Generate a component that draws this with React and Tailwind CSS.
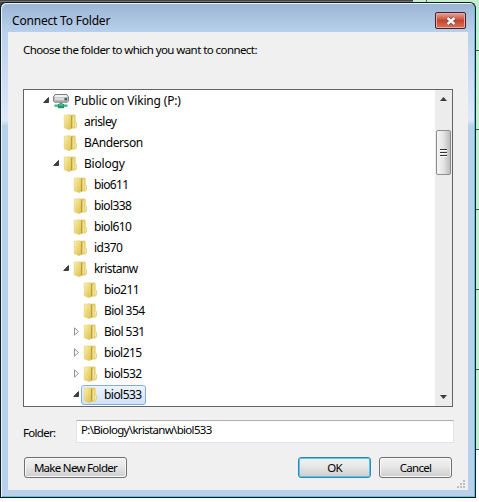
const tree = [
  { label: "Public on Viking (P:)", level: 0, arrow: "open", drive: true, track: "tracking-[-0.17px]" },
  { label: "arisley", level: 1 },
  { label: "BAnderson", level: 1, track: "tracking-[-0.4px]" },
  { label: "Biology", level: 1, arrow: "open", track: "tracking-[-0.2px]" },
  { label: "bio611", level: 2, track: "tracking-[-0.65px]" },
  { label: "biol338", level: 2, track: "tracking-[-0.6px]" },
  { label: "biol610", level: 2, track: "tracking-[-0.6px]" },
  { label: "id370", level: 2 },
  { label: "kristanw", level: 2, arrow: "open" },
  { label: "bio211", level: 3 },
  { label: "Biol 354", level: 3 },
  { label: "Biol 531", level: 3, arrow: "closed" },
  { label: "biol215", level: 3, arrow: "closed" },
  { label: "biol532", level: 3, arrow: "closed" },
  { label: "biol533", level: 3, arrow: "open", selected: true },
];

const indents = ["pl-[19px]", "pl-[29px]", "pl-[39px]", "pl-[49px]"];

function Arrow({ kind }) {
  return (
    <svg width="7" height="9" viewBox="0 0 7 9" className="shrink-0">
      {kind === "open" && <path d="M5.5 1.5V6.5H.7Z" fill="#404040" stroke="#262626" strokeWidth=".8" />}
      {kind === "closed" && <path d="M1.5 .9V8.1L5.5 4.5Z" fill="#fff" stroke="#929292" strokeWidth="1" />}
    </svg>
  );
}

function Folder() {
  return (
    <svg width="16" height="16" viewBox="0 0 16 16" className="shrink-0">
      <defs>
        <linearGradient id="folderFront" x1="0" y1="0" x2="1" y2="1">
          <stop offset="0" stopColor="#fbf0a4" />
          <stop offset="1" stopColor="#dcbf50" />
        </linearGradient>
        <linearGradient id="folderBack" x1="0" y1="0" x2="1" y2="0">
          <stop offset="0" stopColor="#c9a83d" />
          <stop offset="1" stopColor="#f3e48e" />
        </linearGradient>
      </defs>
      <path d="M6 1 11.8.5 12.8 1.4V7.5L13.9 8.6V13L12.6 14.6H6Z" fill="url(#folderBack)" />
      <path d="M1.2 1.2 6.8.7 8.3 2V14.6L6.4 15.7 1.2 13.8Z" fill="url(#folderFront)" stroke="#dcc76a" strokeWidth=".5" />
      <path d="M8.6 2.2V14.3" stroke="#b08e2f" strokeWidth=".8" />
      <path d="M10.2 2.5V13.5" stroke="#fff4b5" strokeWidth=".8" />
      <path d="M13 8.6V12.8" stroke="#c6b254" strokeWidth=".6" />
      <path d="M12.4 8.5V12.5" stroke="#f8f5d8" strokeWidth=".8" />
    </svg>
  );
}

function Drive() {
  return (
    <svg width="16" height="16" viewBox="0 0 16 16" className="shrink-0">
      <path d="M2.2 1.5H13.8L15.5 3.8V8L14.3 9.2H1.7L.5 8V3.8Z" fill="#b9bcbe" stroke="#6f7275" strokeWidth=".9" />
      <path d="M2.6 2H13.4L14.8 4.2H1.2Z" fill="#f1f1f1" />
      <path d="M2 6H11" stroke="#e9e9e9" strokeWidth="1.4" />
      <rect x="11.6" y="4.8" width="2.4" height="2.6" fill="#44654e" />
      <path d="M6.5 9.6H9.5V12H6.5Z" fill="#35a87b" />
      <path d="M1.5 11.5H14.5V13.8H1.5Z" fill="#3fb58b" />
      <path d="M5 11H11V15.2H5Z" fill="#249367" />
      <path d="M6 12H10" stroke="#7bd4b2" />
    </svg>
  );
}

function TreeRow({ item }) {
  return (
    <div className={`flex h-[21px] items-center ${indents[item.level]}`}>
      <Arrow kind={item.arrow} />
      <div
        className={`ml-px flex h-[20px] items-center gap-[5px] rounded-[3px] border pr-[3px] pl-px ${
          item.selected ? "border-[#84acdd] bg-linear-to-b from-[#edf4fd] to-[#cfe2fb]" : "border-transparent"
        }`}
      >
        {item.drive ? <Drive /> : <Folder />}
        <span className={`whitespace-pre text-[12px] leading-[18px] ${item.track || "tracking-[-0.55px]"}`}>{item.label}</span>
      </div>
    </div>
  );
}

function Scrollbar() {
  return (
    <div className="flex w-[17px] flex-col items-center bg-[#ececec]">
      <svg width="7" height="4" className="mt-[7px]" viewBox="0 0 7 4"><path d="M3.5 0 7 4H0Z" fill="#3c3c3c" /></svg>
      <div className="mt-[29px] flex h-[45px] w-[15px] flex-col items-center justify-center gap-px rounded-[2px] border border-[#8d8d8d] bg-linear-to-r from-[#f6f6f6] via-[#e4e4e4] to-[#bdbdbd]">
        <div className="h-[2px] w-[7px] border-b border-white bg-[#333]" />
        <div className="h-[2px] w-[7px] border-b border-white bg-[#333]" />
        <div className="h-[2px] w-[7px] border-b border-white bg-[#333]" />
      </div>
      <svg width="7" height="4" className="mt-auto mb-[7px]" viewBox="0 0 7 4"><path d="M0 0H7L3.5 4Z" fill="#3c3c3c" /></svg>
    </div>
  );
}

function Button({ children, className }) {
  return (
    <button className={`flex h-[21px] items-center justify-center rounded-[3px] border bg-linear-to-b from-[#f3f3f3] from-0% via-[#e7e7e7] via-45% to-[#cdcdcd] whitespace-nowrap ${className}`}>
      {children}
    </button>
  );
}

export default function App() {
  return (
    <div className="flex h-[502px] w-[479px] flex-col overflow-hidden bg-white text-black [font-family:'Noto_Sans','Open_Sans',sans-serif]">
      <div className="flex h-[2px]">
        <div className="w-[413px] border-b border-[#777] bg-[#444]" />
        <div className="w-[13px] bg-[#c6efce]" />
        <div className="w-px bg-[#5a705e]" />
        <div className="flex-1 bg-[#c6efce]" />
      </div>
      <div className="flex h-[496px]">
        <div className="flex w-[476px] bg-linear-to-r from-[#444] from-5% to-[#c6efce] to-95%">
          <div className="flex w-[476px] flex-col rounded-t-[6px] border border-[#101d28] border-b-[#07171d] bg-linear-to-b from-[#9ab5d4] via-[#b9d1eb] via-[30px] to-[#b9d1ea] shadow-[inset_1px_1px_0_#eaf4fc,inset_-1px_-1px_0_#58c7dc]">
            <div className="flex h-[29px] items-start justify-between pr-[9px] pl-[11px]">
              <span className="mt-[9px] text-[12px] leading-[18px] tracking-[-0.2px] whitespace-nowrap">Connect To Folder</span>
              <button className="mt-[9px] flex h-[17px] w-[31px] items-center justify-center rounded-[2px] border border-[#48212a] bg-linear-to-b from-[#e2a69b] from-0% via-[#c7442c] via-50% to-[#d87359] shadow-[inset_0_0_0_1px_#e6aaa1]">
                <svg width="12" height="10" viewBox="0 0 12 10">
                  <path d="M2.5 2 9.5 8M9.5 2 2.5 8" stroke="#6b4a55" strokeWidth="4" />
                  <path d="M2.5 2 9.5 8M9.5 2 2.5 8" stroke="#f8f8f8" strokeWidth="2.4" />
                </svg>
              </button>
            </div>
            <div className="mx-px flex h-[458px] bg-linear-to-b from-[#b9d1eb] from-0% via-[#dfe8fa] via-[88px] to-[#b6d2ea] to-[94px] px-[6px]">
              <div className="flex w-[460px] flex-col bg-[#f0f0f0] px-[15px]">
                <div className="mt-[9px] h-[48px] text-[11.5px] leading-[18px] tracking-[-0.57px] whitespace-nowrap">Choose the folder to which you want to connect:</div>
                <div className="flex h-[318px] w-[430px] border border-[#646464] bg-white">
                  <div className="flex-1 overflow-hidden">
                    {tree.map((item) => <TreeRow key={item.label} item={item} />)}
                  </div>
                  <Scrollbar />
                </div>
                <div className="mt-[13px] flex h-[23px] items-center text-[11.5px] tracking-[-0.68px]">
                  <span className="mt-[2px] w-[53px] shrink-0">Folder:</span>
                  <div className="flex h-[23px] w-[378px] shrink-0 items-center border border-[#e2e3ea] border-t-[#abadb3] bg-white pb-[3px] pl-[4px] whitespace-nowrap">P:\Biology\kristanw\biol533</div>
                </div>
                <div className="mt-[14px] flex text-[11.5px] tracking-[-0.7px]">
                  <Button className="ml-[1px] w-[103px] border-[#707070] shadow-[inset_0_0_0_1px_#f8f8f8]">Make New Folder</Button>
                  <Button className="ml-[171px] w-[73px] border-[#3c7fb1] shadow-[inset_0_0_0_1px_#4fc9ee]">OK</Button>
                  <Button className="ml-[8px] w-[73px] border-[#707070] shadow-[inset_0_0_0_1px_#f8f8f8]">Cancel</Button>
                </div>
                <svg width="10" height="10" viewBox="0 0 10 10" className="mt-[2px] -mr-[14px] self-end" fill="#bdbdbd">
                  <path d="M6 0h2v2H6zM3 3h2v2H3zM6 3h2v2H6zM0 6h2v2H0zM3 6h2v2H3zM6 6h2v2H6z" />
                </svg>
              </div>
            </div>
          </div>
        </div>
        <div className="flex w-[3px] flex-col bg-[#c6efce]">
          <div className="mt-[48px] h-px bg-[#405c46]" />
          <div className="mt-[78px] h-px bg-[#405c46]" />
          <div className="mt-[79px] h-px bg-[#405c46]" />
          <div className="mt-[79px] h-px bg-[#405c46]" />
          <div className="mt-[79px] h-px bg-[#405c46]" />
          <div className="mt-[79px] h-px bg-[#405c46]" />
          <div className="flex-1 bg-white" />
        </div>
      </div>
    </div>
  );
}
